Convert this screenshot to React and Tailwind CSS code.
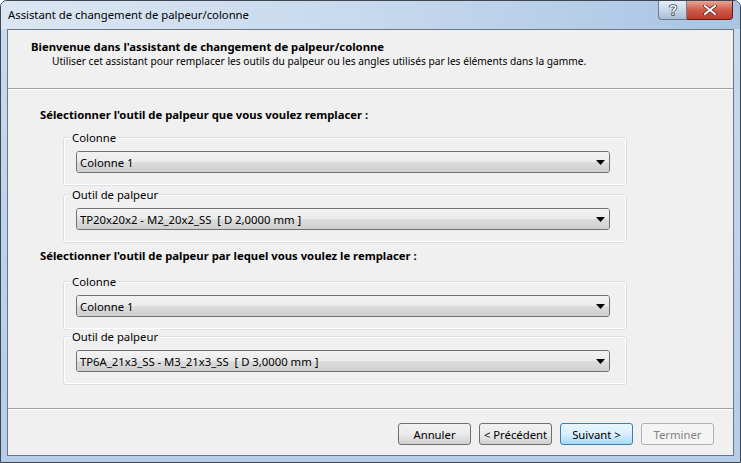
const F = { fontFamily: '"Noto Sans", "Open Sans", sans-serif' };

function Arrow() {
  return (
    <svg width="9" height="5" viewBox="0 0 9 5" className="block">
      <polygon points="0,0 9,0 4.5,5" fill="#000" />
    </svg>
  );
}

function Combo({ value }) {
  return (
    <div className="relative h-[22px] w-full rounded-[3px] border border-[#707070] overflow-hidden flex items-center">
      <div className="absolute inset-0 flex flex-col">
        <div className="h-1/2 bg-gradient-to-b from-[#f2f2f2] to-[#ebebeb]" />
        <div className="h-1/2 bg-gradient-to-b from-[#dddddd] to-[#cfcfcf]" />
      </div>
      <span className="relative pl-[3px] text-[11.3px] leading-[15px] text-black whitespace-pre">{value}</span>
      <span className="relative ml-auto mr-[4px]"><Arrow /></span>
    </div>
  );
}

function Group({ label, value, className = "" }) {
  return (
    <div className={"relative ml-[55px] w-[564px] h-[49px] rounded-[3px] border border-[#d5dfe5] pt-[13px] pl-[12px] pr-[16px] " + className}>
      <div className="absolute inset-0 rounded-[2px] border border-white pointer-events-none" />
      <span className="absolute left-[6px] top-[-8px] bg-[#f0f0f0] px-[2px] text-[11.3px] leading-[15px] text-black">{label}</span>
      <Combo value={value} />
    </div>
  );
}

function Btn({ children, variant }) {
  const base = "w-[73px] h-[22px] rounded-[3px] border flex items-center justify-center text-[11.3px] leading-[15px]";
  if (variant === "default")
    return (
      <div className={base + " border-[#3c7fb1] bg-gradient-to-b from-[#eaf6fd] via-[#d9f0fc] to-[#a7d9f5] text-black"}>{children}</div>
    );
  if (variant === "disabled")
    return <div className={base + " border-[#adb2b5] bg-[#f4f4f4] text-[#838383]"}>{children}</div>;
  return (
    <div className={base + " border-[#707070] bg-gradient-to-b from-[#f2f2f2] via-[#ebebeb] to-[#cfcfcf] text-black"}>{children}</div>
  );
}

export default function App() {
  return (
    <div className="w-[741px] h-[463px] bg-white" style={F}>
      <div className="w-[741px] h-[463px] rounded-t-[7px] border border-[#3f4650] bg-gradient-to-b from-[#c9dcef] via-[#bdd3eb] to-[#b5cde8] flex flex-col overflow-hidden">
        <div className="h-[28px] flex items-start bg-gradient-to-r from-[#dbe6f2] via-[#c6d9ee] to-[#a9c5e3]">
          <div className="pl-[7px] pt-[6px] text-[11.3px] leading-[15px] text-black">Assistant de changement de palpeur/colonne</div>
          <div className="ml-auto mr-[7px] flex h-[19px]">
            <div className="w-[29px] h-[19px] rounded-bl-[4px] border border-t-0 border-[#6f7c8b] bg-gradient-to-b from-[#e6eef7] via-[#c9d8e8] to-[#a9bdd4] flex items-center justify-center">
              <svg width="10" height="12" viewBox="0 0 10 12">
                <path d="M2.2 3.6 C2.2 1.2 7.8 1.2 7.8 3.6 C7.8 5.6 5 5.4 5 7.6" fill="none" stroke="#3b4a5c" strokeWidth="3.2" />
                <path d="M2.2 3.6 C2.2 1.2 7.8 1.2 7.8 3.6 C7.8 5.6 5 5.4 5 7.6" fill="none" stroke="#ffffff" strokeWidth="1.6" />
                <rect x="3.4" y="8.6" width="3.2" height="3.2" fill="#3b4a5c" />
                <rect x="4.2" y="9.4" width="1.6" height="1.6" fill="#ffffff" />
              </svg>
            </div>
            <div className="w-[46px] h-[19px] rounded-br-[4px] border border-l-0 border-t-0 border-[#5a1e1a] bg-gradient-to-b from-[#e7a594] via-[#cf5a48] to-[#c0392b] flex items-center justify-center">
              <svg width="14" height="10" viewBox="0 0 14 10">
                <path d="M2 1 L12 9 M12 1 L2 9" stroke="#4a1a14" strokeWidth="3.4" strokeLinecap="square" />
                <path d="M2 1 L12 9 M12 1 L2 9" stroke="#ffffff" strokeWidth="2" strokeLinecap="square" />
              </svg>
            </div>
          </div>
        </div>
        <div className="mx-[6px] mb-[6px] flex-1 border border-[#6b7683] bg-[#f0f0f0] flex flex-col">
          <div className="h-[58px] pt-[9px]">
            <div className="pl-[23px] text-[11.3px] leading-[15px] font-bold text-black">Bienvenue dans l'assistant de changement de palpeur/colonne</div>
            <div className="pl-[44px] text-[10.2px] leading-[15px] text-black">Utiliser cet assistant pour remplacer les outils du palpeur ou les angles utilisés par les éléments dans la gamme.</div>
          </div>
          <div className="h-px bg-[#a0a0a0]" />
          <div className="h-px bg-white" />
          <div className="flex-1 pt-[17px]">
            <div className="pl-[32px] text-[11.3px] leading-[15px] font-bold text-black">Sélectionner l'outil de palpeur que vous voulez remplacer :</div>
            <Group className="mt-[15px]" label="Colonne" value="Colonne 1" />
            <Group className="mt-[8px]" label="Outil de palpeur" value="TP20x20x2 - M2_20x2_SS  [ D 2,0000 mm ]" />
            <div className="mt-[5px] pl-[32px] text-[11.3px] leading-[15px] font-bold text-black">Sélectionner l'outil de palpeur par lequel vous voulez le remplacer :</div>
            <Group className="mt-[18px]" label="Colonne" value="Colonne 1" />
            <Group className="mt-[6px]" label="Outil de palpeur" value="TP6A_21x3_SS - M3_21x3_SS  [ D 3,0000 mm ]" />
          </div>
          <div className="h-px bg-[#a0a0a0]" />
          <div className="h-px bg-white" />
          <div className="h-[45px] pt-[13px] pr-[19px] flex justify-end gap-[8px]">
            <Btn>Annuler</Btn>
            <Btn>&lt; Précédent</Btn>
            <Btn variant="default">Suivant &gt;</Btn>
            <Btn variant="disabled">Terminer</Btn>
          </div>
        </div>
      </div>
    </div>
  );
}
